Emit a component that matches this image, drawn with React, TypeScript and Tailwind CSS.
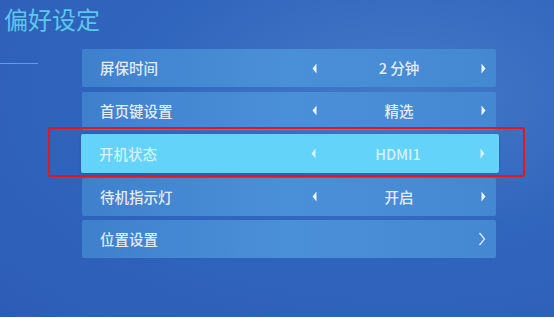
const font = { fontFamily: '"Noto Sans CJK SC", "Noto Sans", sans-serif' }

type Item = { label: string; value?: string; active?: boolean; link?: boolean }

const items: Item[] = [
  { label: '屏保时间', value: '2 分钟' },
  { label: '首页键设置', value: '精选' },
  { label: '开机状态', value: 'HDMI1', active: true },
  { label: '待机指示灯', value: '开启' },
  { label: '位置设置', link: true },
]

function Arrow({ dir, color }: { dir: 'left' | 'right'; color: string }) {
  return (
    <svg width="5" height="11" viewBox="0 0 5 11" className="shrink-0">
      {dir === 'left' ? (
        <path d="M4.5 0.5 L0.5 5.5 L4.5 10.5 Z" fill={color} />
      ) : (
        <path d="M0.5 0.5 L4.5 5.5 L0.5 10.5 Z" fill={color} />
      )}
    </svg>
  )
}

function Row({ item }: { item: Item }) {
  const text = item.active ? 'text-[#d3f1fd]' : 'text-[#e2ecf8]'
  const arrowColor = item.active ? '#d3f1fd' : '#eef4fb'
  return (
    <div
      className={`flex items-center h-[38px] ${
        item.active
          ? 'ml-[-1px] w-[418px] h-[39px] bg-[#63d3f9] rounded-[2px] shadow-[0_1px_3px_rgba(20,60,140,0.35)]'
          : 'w-[414px] bg-[linear-gradient(90deg,#3f80cd_0%,#4a90d8_50%,#4588d2_100%)] rounded-[2px]'
      }`}
    >
      <div className={`w-[230px] pl-[18px] text-[14.5px] font-medium ${text}`}>{item.label}</div>
      {item.link ? (
        <div className="flex-1 flex justify-end pr-[10px]">
          <svg width="8" height="14" viewBox="0 0 8 14">
            <path d="M1.5 1 L6.5 7 L1.5 13" fill="none" stroke="#dce8f6" strokeWidth="1.3" />
          </svg>
        </div>
      ) : (
        <>
          <Arrow dir="left" color={arrowColor} />
          <div className={`w-[164px] text-center text-[14.5px] font-medium ${text}`}>{item.value}</div>
          <Arrow dir="right" color={arrowColor} />
        </>
      )}
    </div>
  )
}

export default function App() {
  return (
    <div
      style={font}
      className="relative w-[554px] h-[318px] overflow-hidden bg-[radial-gradient(ellipse_at_72%_30%,#4479c8_0%,#3166bd_45%,#2c5cb7_100%)]"
    >
      <div className="h-[317px]">
        <h1 className="pl-[4px] pt-[2px] text-[24px] leading-[34px] text-[#5cc6ec]">偏好设定</h1>

        <div className="flex mt-[13px]">
          <div className="w-[82px]">
            <div className="mt-[14px] w-[38px] h-px bg-[#6f9ad6]" />
          </div>
          <div className="flex flex-col gap-[4.5px]">
            {items.map((it) => (
              <Row key={it.label} item={it} />
            ))}
          </div>
        </div>
      </div>
      <div className="h-px bg-white" />

      {/* highlight annotation */}
      <div className="absolute left-[48px] top-[127px] w-[477px] h-[50px] border-2 border-[#e5161c] rounded-[3px]" />
    </div>
  )
}
